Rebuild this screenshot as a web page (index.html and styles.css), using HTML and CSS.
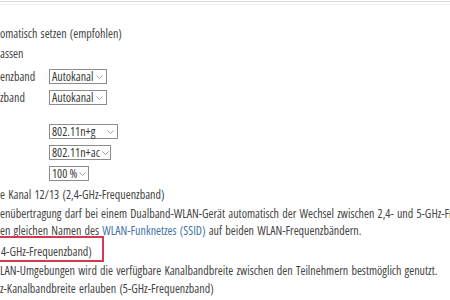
FILE: index.html
```html
<!DOCTYPE html>
<html lang="de">
<head>
<meta charset="utf-8">
<link rel="stylesheet" href="styles.css">
</head>
<body>
<div class="topline"></div>
<div class="content">
  <div class="opt">omatisch setzen (empfohlen)</div>
  <div class="opt">assen</div>
  <div class="field first"><span class="lbl">enzband</span><span class="sel w-auto">Autokanal<svg class="chev" viewBox="0 0 7 4"><path d="M0.5 0.5 L3.5 3.5 L6.5 0.5"/></svg></span></div>
  <div class="field"><span class="lbl">zband</span><span class="sel w-auto">Autokanal<svg class="chev" viewBox="0 0 7 4"><path d="M0.5 0.5 L3.5 3.5 L6.5 0.5"/></svg></span></div>
  <div class="field gap"><span class="lbl"></span><span class="sel w-g">802.11n+g<svg class="chev" viewBox="0 0 7 4"><path d="M0.5 0.5 L3.5 3.5 L6.5 0.5"/></svg></span></div>
  <div class="field"><span class="lbl"></span><span class="sel w-ac">802.11n+ac<svg class="chev" viewBox="0 0 7 4"><path d="M0.5 0.5 L3.5 3.5 L6.5 0.5"/></svg></span></div>
  <div class="field"><span class="lbl"></span><span class="sel w-pct">100 %<svg class="chev" viewBox="0 0 7 4"><path d="M0.5 0.5 L3.5 3.5 L6.5 0.5"/></svg></span></div>
  <div class="opt r8">e Kanal 12/13 (2,4-GHz-Frequenzband)</div>
  <p class="para">enübertragung darf bei einem Dualband-WLAN-Gerät automatisch der Wechsel zwischen 2,4- und 5-GHz-Frequenzband<br>en gleichen Namen des <span class="link">WLAN-Funknetzes (SSID)</span> auf beiden WLAN-Frequenzbändern.</p>
  <div class="opt marked">4-GHz-Frequenzband)<span class="mark"></span></div>
  <p class="para">LAN-Umgebungen wird die verfügbare Kanalbandbreite zwischen den Teilnehmern bestmöglich genutzt.</p>
  <div class="opt last">z-Kanalbandbreite erlauben (5-GHz-Frequenzband)</div>
</div>
</body>
</html>
```
FILE: styles.css
```css
html, body {
  margin: 0;
  padding: 0;
  background: #fff;
  overflow: hidden;
}
body {
  font-family: "Open Sans", sans-serif;
  font-stretch: 75%;
  font-size: 12px;
  color: #444;
  width: 450px;
  height: 300px;
}
.topline {
  margin-top: 1px;
  height: 2px;
  border-top: 1px solid #d9d9d9;
  border-bottom: 1px solid #efefef;
}
.content {
  padding-top: 19px;
  white-space: nowrap;
  word-spacing: 1px;
  overflow: hidden;
}
.opt {
  line-height: 20px;
  height: 20px;
}
.field {
  display: flex;
  align-items: center;
  height: 21px;
}
.field.first { margin-top: 2px; }
.field.gap { margin-top: 13px; }
.lbl {
  width: 49px;
  flex: none;
  line-height: 21px;
}
.sel {
  box-sizing: border-box;
  height: 15px;
  border: 1px solid #8c8c8c;
  display: flex;
  align-items: center;
  justify-content: space-between;
  padding: 0 3px 0 2px;
  line-height: 13px;
  color: #3a3a3a;
  word-spacing: 0;
}
.w-auto { width: 58px; }
.w-g { width: 69px; }
.w-ac { width: 62px; }
.w-pct { width: 40px; }
.chev {
  width: 7px;
  height: 4px;
  flex: none;
  margin-left: 2px;
}
.chev path {
  fill: none;
  stroke: #a0a0a0;
  stroke-width: 1;
}
.r8 {
  line-height: 21px;
  height: 21px;
}
.para {
  margin: 0;
  line-height: 17px;
}
.marked {
  position: relative;
  margin-top: 3px;
  padding-left: 1px;
}
.mark {
  position: absolute;
  left: -10px;
  top: -6px;
  width: 114px;
  height: 26px;
  box-sizing: border-box;
  border: 2px solid #d3394f;
}
.link {
  color: #3f73a6;
}
```
